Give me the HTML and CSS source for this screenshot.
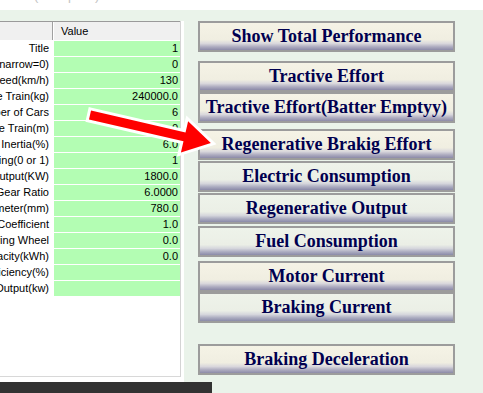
FILE: index.html
```html
<!DOCTYPE html>
<html>
<head>
<meta charset="utf-8">
<link rel="stylesheet" href="styles.css">
</head>
<body>
<div class="top"><span class="top-text">(Graphs)</span></div>
<div class="main">
  <div class="panel">
    <div class="grid">
      <div class="hdr">
        <div class="hlabel"></div>
        <div class="hval">Value</div>
      </div>
      <div class="row"><div class="lab"><span>Title</span></div><div class="val">1</div></div>
      <div class="row"><div class="lab"><span>Gauge(Wide=1,narrow=0)</span></div><div class="val">0</div></div>
      <div class="row"><div class="lab"><span>Max Speed(km/h)</span></div><div class="val">130</div></div>
      <div class="row"><div class="lab"><span>Weight of the Train(kg)</span></div><div class="val">240000.0</div></div>
      <div class="row"><div class="lab"><span>Number of Cars</span></div><div class="val">6</div></div>
      <div class="row"><div class="lab"><span>Length of the Train(m)</span></div><div class="val">0</div></div>
      <div class="row"><div class="lab"><span>Rotational Inertia(%)</span></div><div class="val">6.0</div></div>
      <div class="row"><div class="lab"><span>Regenerative Braking(0 or 1)</span></div><div class="val">1</div></div>
      <div class="row"><div class="lab"><span>Motor Output(KW)</span></div><div class="val">1800.0</div></div>
      <div class="row"><div class="lab"><span>Gear Ratio</span></div><div class="val">6.0000</div></div>
      <div class="row"><div class="lab"><span>Wheel Diameter(mm)</span></div><div class="val">780.0</div></div>
      <div class="row"><div class="lab"><span>Adhesion Coefficient</span></div><div class="val">1.0</div></div>
      <div class="row"><div class="lab"><span>Number of Driving Wheel</span></div><div class="val">0.0</div></div>
      <div class="row"><div class="lab"><span>Battery Capacity(kWh)</span></div><div class="val">0.0</div></div>
      <div class="row"><div class="lab"><span>Motor Efficiency(%)</span></div><div class="val"></div></div>
      <div class="row"><div class="lab"><span>Engine Output(kw)</span></div><div class="val"></div></div>
    </div>
  </div>
  <div class="buttons">
    <div class="btn">Show Total Performance</div>
    <div class="btn mt9">Tractive Effort</div>
    <div class="btn">Tractive Effort(Batter Emptyy)</div>
    <div class="btn mt6">Regenerative Brakig Effort</div>
    <div class="btn pale mt1">Electric Consumption</div>
    <div class="btn pale mt1">Regenerative Output</div>
    <div class="btn pale mt2">Fuel Consumption</div>
    <div class="btn mt4">Motor Current</div>
    <div class="btn pale">Braking Current</div>
    <div class="btn mt21">Braking Deceleration</div>
  </div>
</div>
<div class="darkbar"></div>
<svg class="arrow" width="483" height="393" viewBox="0 0 483 393">
  <g transform="translate(90 115) rotate(13)">
    <polygon points="0,-4.5 97,-4.5 97,-16 124,0 97,16 97,4.5 0,4.5" fill="#ff0000" stroke="#ffffff" stroke-width="6" stroke-linejoin="miter" paint-order="stroke"/>
  </g>
</svg>
</body>
</html>
```

FILE: styles.css
```css
html, body {
  margin: 0;
  padding: 0;
}
body {
  position: relative;
  width: 483px;
  height: 393px;
  overflow: hidden;
  background: #eaf3ea;
  font-family: "Liberation Sans", Arial, sans-serif;
}
.top {
  height: 10px;
  background: #ffffff;
  overflow: hidden;
  padding-left: 34px;
}
.top-text {
  display: block;
  margin-top: -11px;
  font-size: 13px;
  line-height: 14px;
  color: #c4c4c4;
  letter-spacing: 2px;
}
.main {
  display: flex;
  margin-top: 11px;
  height: 361px;
}
.panel {
  width: 184px;
  height: 361px;
  box-sizing: border-box;
  background: #ffffff;
  padding-right: 3px;
  padding-bottom: 5px;
}
.grid {
  width: 181px;
  height: 356px;
  box-sizing: border-box;
  border-right: 1px solid #d4d4d4;
  border-bottom: 1px solid #d8d8d8;
  background: #ffffff;
  font-size: 11px;
  color: #000000;
}
.hdr {
  display: flex;
  height: 19px;
  box-sizing: border-box;
  border-top: 1px solid #9a9a9a;
  background: #f0f0f0;
}
.hlabel {
  width: 53px;
  box-sizing: border-box;
  border-right: 1px solid #a0a0a0;
}
.hval {
  flex: 1;
  border-left: 1px solid #ffffff;
  padding-left: 7px;
  line-height: 18px;
}
.row {
  display: flex;
  height: 16px;
  box-sizing: border-box;
  padding-top: 1px;
}
.lab {
  width: 53px;
  box-sizing: border-box;
  padding-right: 4px;
  display: flex;
  justify-content: flex-end;
  overflow: hidden;
  white-space: nowrap;
  line-height: 15px;
}
.val {
  width: 126px;
  margin-left: 1px;
  box-sizing: border-box;
  background: #b3fdb3;
  text-align: right;
  padding-right: 2px;
  line-height: 15px;
}
.buttons {
  margin-left: 14px;
  width: 257px;
  display: flex;
  flex-direction: column;
}
.btn {
  height: 31px;
  box-sizing: border-box;
  border: 2px solid #9c9c9c;
  background: linear-gradient(to bottom, #f5f3e6 0%, #f0eee1 62%, #d9d7dc 76%, #aeacc0 88%, #8c8aa8 100%);
  font-family: "Liberation Serif", "Times New Roman", serif;
  font-weight: bold;
  font-size: 18px;
  line-height: 27px;
  color: #000050;
  text-align: center;
  white-space: nowrap;
}
.btn.pale {
  background: linear-gradient(to bottom, #eef3ea 0%, #ebefe6 62%, #d5d6dc 76%, #abacc0 88%, #8a8aa8 100%);
}
.mt1 { margin-top: 1px; }
.mt2 { margin-top: 2px; }
.mt4 { margin-top: 4px; }
.mt6 { margin-top: 6px; }
.mt9 { margin-top: 9px; }
.mt21 { margin-top: 21px; }
.darkbar {
  width: 212px;
  height: 11px;
  background: #323232;
}
.arrow {
  position: absolute;
  left: 0;
  top: 0;
  pointer-events: none;
}
```
